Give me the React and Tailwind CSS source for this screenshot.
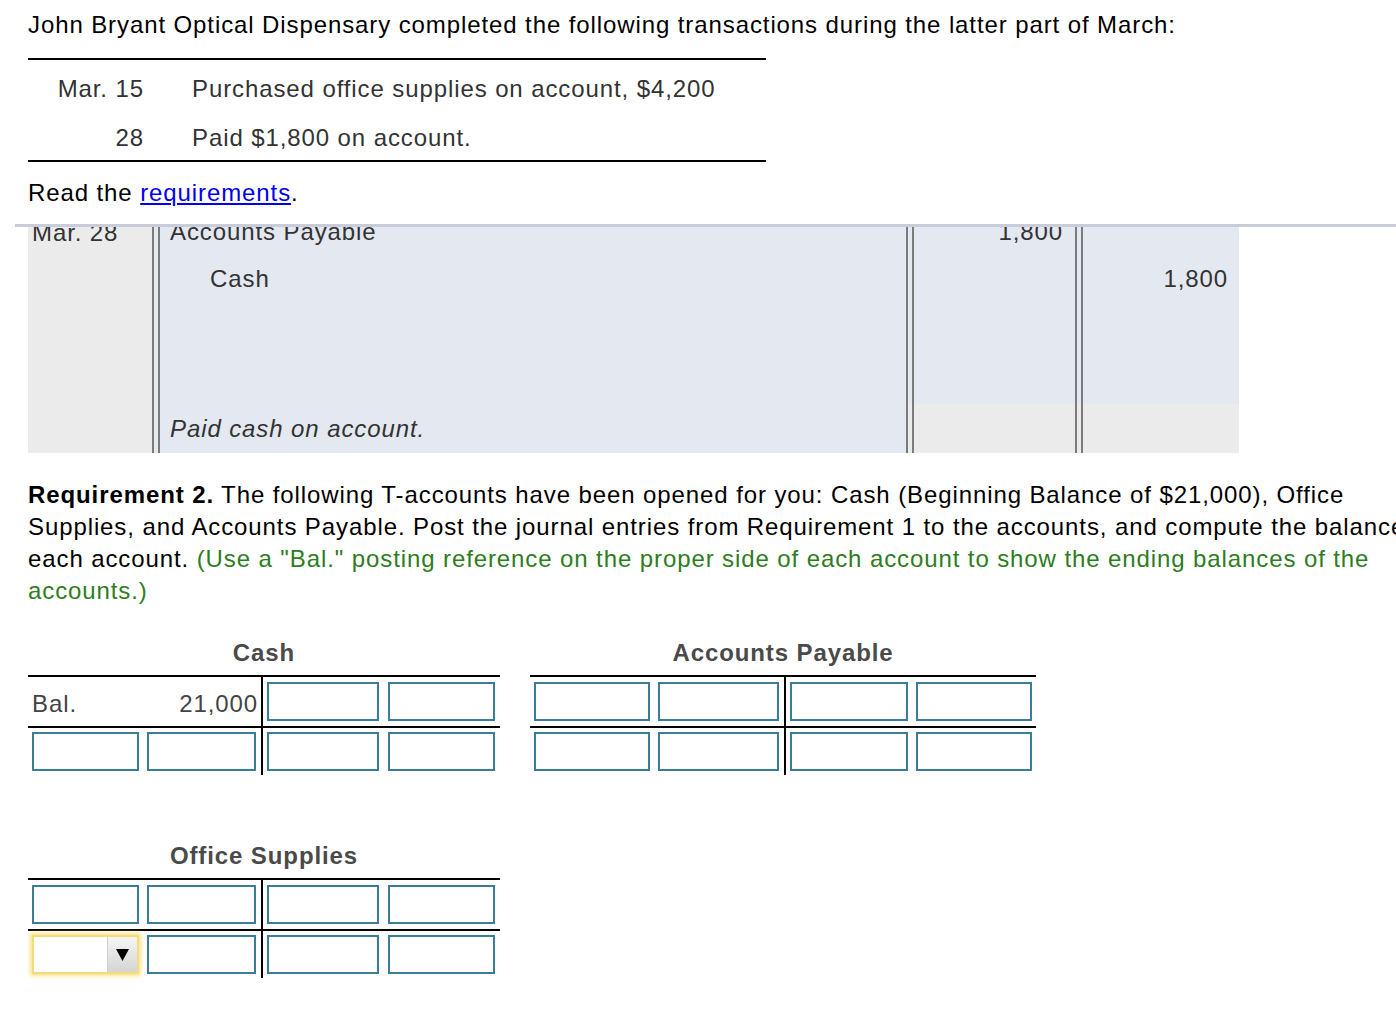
import React from "react";

function Inp({ w }) {
  return <div className={`h-[39px] border-2 border-[#3a7d9b] bg-white ${w}`} />;
}

function DoubleLine({ bottomGrey }) {
  return (
    <div className="flex w-[8px] shrink-0 flex-col">
      <div className="flex-1 border-x-2 border-[#7b7b7b] bg-[#e4e8f1]" />
      <div className={`h-[50px] border-x-2 border-[#7b7b7b] ${bottomGrey ? "bg-[#ebebeb]" : "bg-[#e4e8f1]"}`} />
    </div>
  );
}

function Select() {
  return (
    <div className="flex h-[39px] w-[107px] border-2 border-[#f6dc78] bg-white shadow-[0_0_4px_2px_#fbe38a]">
      <div className="flex-1" />
      <div className="flex w-[30px] items-center justify-center border-l border-[#cfcfcf] bg-gradient-to-b from-[#f6f6f6] to-[#d4d4d4]">
        <svg width="13" height="12" viewBox="0 0 13 12">
          <path d="M0 0 H13 L6.5 12 Z" fill="#000" />
        </svg>
      </div>
    </div>
  );
}

export default function App() {
  return (
    <div className="h-[1010px] w-[1396px] overflow-hidden bg-white font-['Liberation_Sans',Arial,sans-serif] text-[24px] leading-[32px] tracking-[0.9px] text-black">
      {/* header */}
      <div className="px-[28px] pt-[9px]">
        <div>John Bryant Optical Dispensary completed the following transactions during the latter part of March:</div>
        <div className="mt-[17px] w-[738px] border-y-2 border-black pb-[6px] pt-[13px] text-[#333]">
          <div className="flex">
            <div className="w-[116px] text-right">Mar. 15</div>
            <div className="ml-[48px]">Purchased office supplies on account, $4,200</div>
          </div>
          <div className="mt-[17px] flex">
            <div className="w-[116px] text-right">28</div>
            <div className="ml-[48px]">Paid $1,800 on account.</div>
          </div>
        </div>
        <div className="mt-[15px]">
          Read the <span className="text-[#0000ee] underline">requirements</span>.
        </div>
      </div>

      {/* scrolled journal table */}
      <div className="ml-[15px] mt-[15px] border-t-[3px] border-[#c9cdd9]">
        <div className="h-[226px] overflow-hidden pl-[13px]">
          <div className="-mt-[23px] flex w-[1210px] text-[#333]">
            <div className="w-[124px] shrink-0 bg-[#ebebeb]">
              <div className="flex h-[50px] items-center pl-[4px] pt-[8px]">Mar. 28</div>
              <div className="h-[200px]" />
            </div>
            <DoubleLine />
            <div className="flex w-[746px] shrink-0 flex-col bg-[#e4e8f1]">
              <div className="flex h-[50px] items-center pl-[10px] pt-[6px]">Accounts Payable</div>
              <div className="flex h-[50px] items-center pl-[50px]">Cash</div>
              <div className="h-[100px]" />
              <div className="flex h-[50px] items-center pl-[10px] italic">Paid cash on account.</div>
            </div>
            <DoubleLine bottomGrey />
            <div className="flex w-[161px] shrink-0 flex-col">
              <div className="bg-[#e4e8f1]">
                <div className="flex h-[50px] items-center justify-end pr-[12px] pt-[6px]">1,800</div>
                <div className="h-[150px]" />
              </div>
              <div className="h-[50px] bg-[#ebebeb]" />
            </div>
            <DoubleLine bottomGrey />
            <div className="flex w-[156px] shrink-0 flex-col">
              <div className="bg-[#e4e8f1]">
                <div className="h-[50px]" />
                <div className="flex h-[50px] items-center justify-end pr-[11px]">1,800</div>
                <div className="h-[100px]" />
              </div>
              <div className="h-[50px] bg-[#ebebeb]" />
            </div>
          </div>
        </div>
      </div>

      {/* requirement 2 */}
      <div className="mt-[26px] whitespace-nowrap pl-[28px]">
        <div>
          <span className="font-bold">Requirement 2.</span> The following T-accounts have been opened for you: Cash (Beginning Balance of $21,000), Office
        </div>
        <div>Supplies, and Accounts Payable. Post the journal entries from Requirement 1 to the accounts, and compute the balance of</div>
        <div>
          each account. <span className="text-[#2e7d1e]">(Use a "Bal." posting reference on the proper side of each account to show the ending balances of the</span>
        </div>
        <div className="text-[#2e7d1e]">accounts.)</div>
      </div>

      {/* T-accounts */}
      <div className="mt-[30px] flex gap-[30px] pl-[28px]">
        <div className="w-[472px]">
          <div className="text-center font-bold text-[#4a4a4a]">Cash</div>
          <div className="mt-[6px] border-t-2 border-black">
            <div className="flex h-[49px]">
              <div className="flex w-[235px] items-center justify-between border-r-2 border-black pl-[4px] pr-[3px] pt-[5px] text-[#444]">
                <span>Bal.</span>
                <span>21,000</span>
              </div>
              <div className="flex flex-1 items-center gap-[9px] pl-[4px]">
                <Inp w="w-[112px]" />
                <Inp w="w-[107px]" />
              </div>
            </div>
            <div className="flex h-[49px] border-t-2 border-black">
              <div className="flex w-[235px] items-center gap-[8px] border-r-2 border-black pl-[4px]">
                <Inp w="w-[107px]" />
                <Inp w="w-[109px]" />
              </div>
              <div className="flex flex-1 items-center gap-[9px] pl-[4px]">
                <Inp w="w-[112px]" />
                <Inp w="w-[107px]" />
              </div>
            </div>
          </div>
        </div>

        <div className="w-[506px]">
          <div className="text-center font-bold text-[#4a4a4a]">Accounts Payable</div>
          <div className="mt-[6px] border-t-2 border-black">
            <div className="flex h-[49px]">
              <div className="flex w-[256px] items-center gap-[8px] border-r-2 border-black pl-[4px]">
                <Inp w="w-[116px]" />
                <Inp w="w-[121px]" />
              </div>
              <div className="flex flex-1 items-center gap-[8px] pl-[4px]">
                <Inp w="w-[118px]" />
                <Inp w="w-[116px]" />
              </div>
            </div>
            <div className="flex h-[49px] border-t-2 border-black">
              <div className="flex w-[256px] items-center gap-[8px] border-r-2 border-black pl-[4px]">
                <Inp w="w-[116px]" />
                <Inp w="w-[121px]" />
              </div>
              <div className="flex flex-1 items-center gap-[8px] pl-[4px]">
                <Inp w="w-[118px]" />
                <Inp w="w-[116px]" />
              </div>
            </div>
          </div>
        </div>
      </div>

      <div className="mt-[65px] pl-[28px]">
        <div className="w-[472px]">
          <div className="text-center font-bold text-[#4a4a4a]">Office Supplies</div>
          <div className="mt-[6px] border-t-2 border-black">
            <div className="flex h-[49px]">
              <div className="flex w-[235px] items-center gap-[8px] border-r-2 border-black pl-[4px]">
                <Inp w="w-[107px]" />
                <Inp w="w-[109px]" />
              </div>
              <div className="flex flex-1 items-center gap-[9px] pl-[4px]">
                <Inp w="w-[112px]" />
                <Inp w="w-[107px]" />
              </div>
            </div>
            <div className="flex h-[49px] border-t-2 border-black">
              <div className="flex w-[235px] items-center gap-[8px] border-r-2 border-black pl-[4px]">
                <Select />
                <Inp w="w-[109px]" />
              </div>
              <div className="flex flex-1 items-center gap-[9px] pl-[4px]">
                <Inp w="w-[112px]" />
                <Inp w="w-[107px]" />
              </div>
            </div>
          </div>
        </div>
      </div>
    </div>
  );
}
